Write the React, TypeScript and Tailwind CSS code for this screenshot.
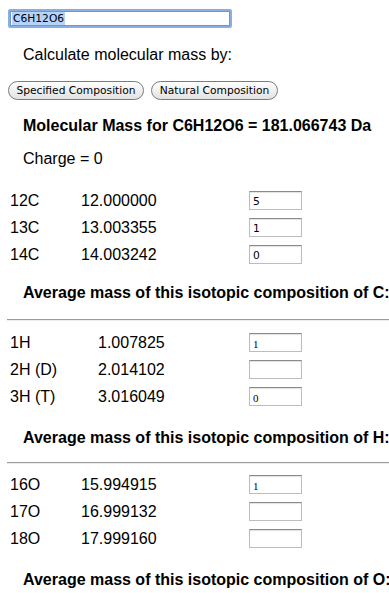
import React from "react";

type Row = { label: string; mass: string; value: string };

const carbon: Row[] = [
  { label: "12C", mass: "12.000000", value: "5" },
  { label: "13C", mass: "13.003355", value: "1" },
  { label: "14C", mass: "14.003242", value: "0" },
];
const hydrogen: Row[] = [
  { label: "1H", mass: "1.007825", value: "1" },
  { label: "2H (D)", mass: "2.014102", value: "" },
  { label: "3H (T)", mass: "3.016049", value: "0" },
];
const oxygen: Row[] = [
  { label: "16O", mass: "15.994915", value: "1" },
  { label: "17O", mass: "16.999132", value: "" },
  { label: "18O", mass: "17.999160", value: "" },
];

function IsoTable({
  rows,
  wide,
  serif,
}: {
  rows: Row[];
  wide?: boolean;
  serif?: boolean;
}) {
  return (
    <div className="flex flex-col">
      {rows.map((r) => (
        <div key={r.label} className="flex h-[27px] items-center pl-[10px]">
          <div className={wide ? "w-[88px] shrink-0" : "w-[71px] shrink-0"}>{r.label}</div>
          <div className={wide ? "w-[151px] shrink-0" : "w-[168px] shrink-0"}>{r.mass}</div>
          <input
            readOnly
            value={r.value}
            className={
              "h-[19px] w-[53px] shrink-0 border border-[#bdbdbd] border-t-[#8a8a8a] bg-white px-[3px] pt-[2px] text-[10.7px] leading-[14px] text-black shadow-[inset_0_1px_1px_rgba(0,0,0,0.12)] outline-none " +
              (serif
                ? "font-['Liberation_Serif','Times_New_Roman',serif] text-[11px]"
                : "font-['DejaVu_Sans',Verdana,sans-serif]")
            }
          />
        </div>
      ))}
    </div>
  );
}

function Hr({ mt }: { mt: string }) {
  return (
    <div className={"ml-[7px] h-[2px] border-t border-b border-t-[#9a9a9a] border-b-[#ececec] " + mt} />
  );
}

export default function App() {
  return (
    <div className="relative h-[593px] w-[389px] overflow-hidden bg-white font-['Liberation_Sans',Arial,sans-serif] text-[16px] leading-[18px] text-black">
      <div className="pl-[8px] pt-[9px]">
        <div className="flex h-[19px] w-[224px] items-center rounded-[2px] border-[2px] border-[#89aee3] bg-white shadow-[inset_0_0_0_1px_#6b96d6]">
          <span className="ml-[2px] bg-[#b4d3fb] px-[1px] font-['DejaVu_Sans',Verdana,sans-serif] text-[10.7px] leading-[13px] text-black">
            C6H12O6
          </span>
        </div>
      </div>

      <p className="mt-[18px] pl-[23px]">Calculate molecular mass by:</p>

      <div className="mt-[17px] flex gap-[7px] pl-[8px]">
        <button className="flex h-[19px] w-[136px] items-center justify-center rounded-full border border-[#7b7b7b] bg-linear-to-b from-white to-[#e2e2e2] font-['DejaVu_Sans',Verdana,sans-serif] text-[10.7px] leading-[12px] text-black">
          Specified Composition
        </button>
        <button className="flex h-[19px] w-[127px] items-center justify-center rounded-full border border-[#7b7b7b] bg-linear-to-b from-white to-[#e2e2e2] font-['DejaVu_Sans',Verdana,sans-serif] text-[10.7px] leading-[12px] text-black">
          Natural Composition
        </button>
      </div>

      <p className="mt-[17px] whitespace-nowrap pl-[23px] font-bold">
        Molecular Mass for C6H12O6 = 181.066743 Da
      </p>

      <p className="mt-[15px] pl-[23px]">Charge = 0</p>

      <div className="mt-[19px]">
        <IsoTable rows={carbon} />
      </div>

      <p className="mt-[16px] whitespace-nowrap pl-[23px] font-bold">
        Average mass of this isotopic composition of C:
      </p>

      <Hr mt="mt-[17px]" />

      <div className="mt-[8px]">
        <IsoTable rows={hydrogen} wide serif />
      </div>

      <p className="mt-[19px] whitespace-nowrap pl-[23px] font-bold">
        Average mass of this isotopic composition of H:
      </p>

      <Hr mt="mt-[15px]" />

      <div className="mt-[7px]">
        <IsoTable rows={oxygen} serif />
      </div>

      <p className="mt-[19px] whitespace-nowrap pl-[23px] font-bold">
        Average mass of this isotopic composition of O:
      </p>
    </div>
  );
}
